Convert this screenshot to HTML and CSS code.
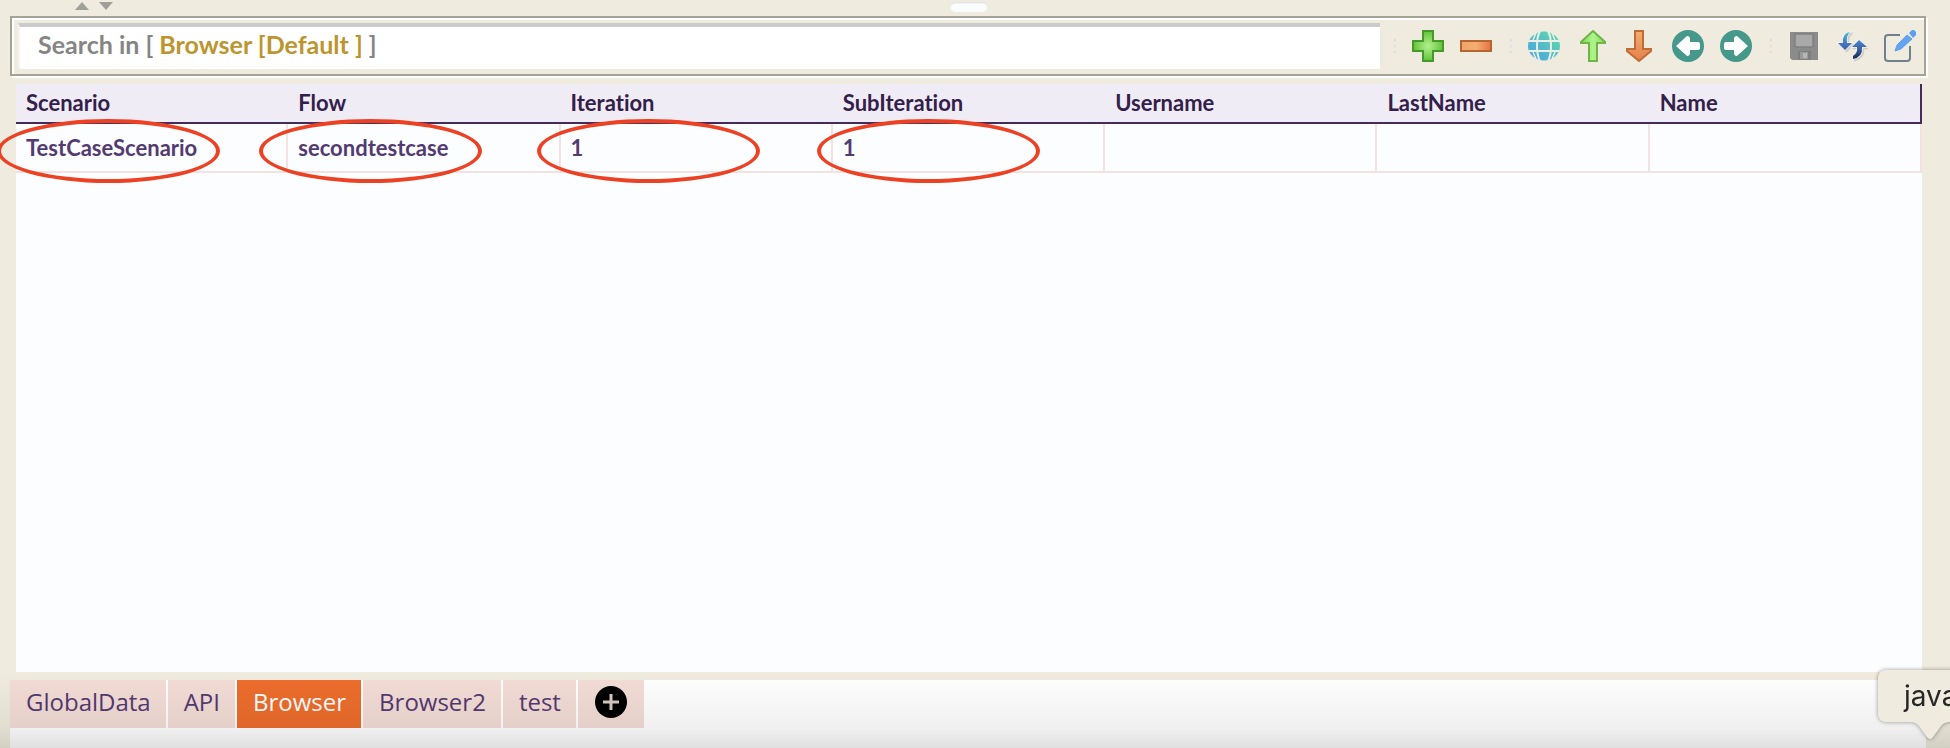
FILE: index.html
```html
<!DOCTYPE html>
<html lang="en">
<head>
<meta charset="utf-8">
<title>Test Data</title>
<link rel="stylesheet" href="styles.css">
</head>
<body>
<div class="app">
  <div class="split-bar">
    <button class="split-btn" aria-label="Collapse up"><svg width="14" height="8" viewBox="0 0 14 8"><path d="M0 8L7 0l7 8z" fill="#a09f9a"/></svg></button>
    <button class="split-btn" aria-label="Collapse down"><svg width="14" height="8" viewBox="0 0 14 8"><path d="M0 0l7 8 7-8z" fill="#a09f9a"/></svg></button>
    <span class="grip"></span>
  </div>

  <div class="toolbar">
    <div class="search">
      <label class="search-label" for="search">Search in [ <span class="scope">Browser [Default ]</span> ]</label>
      <input class="search-input" id="search" type="text">
    </div>
    <div class="tools">
      <span class="sep"></span>
      <button class="tool" aria-label="Add row">
        <svg viewBox="0 0 32 32"><defs><radialGradient id="gp"><stop offset="0" stop-color="#b4f08c"/><stop offset="1" stop-color="#62c23c"/></radialGradient></defs><path d="M11 1h10v10h10v10H21v10H11V21H1V11h10z" fill="url(#gp)" stroke="#469a28" stroke-width="2"/></svg>
      </button>
      <button class="tool" aria-label="Delete row">
        <svg viewBox="0 0 32 32"><defs><linearGradient id="gm"><stop offset="0" stop-color="#f0a468"/><stop offset=".5" stop-color="#f4ae72"/><stop offset="1" stop-color="#e67444"/></linearGradient></defs><path d="M1 11h30v10H1z" fill="url(#gm)" stroke="#b5652f" stroke-width="2"/></svg>
      </button>
      <span class="sep"></span>
      <button class="tool" aria-label="Global data">
        <svg viewBox="0 0 32 32"><defs><linearGradient id="gg" x1="0" y1="1" x2="1" y2="0"><stop offset="0" stop-color="#4aa0e4"/><stop offset=".5" stop-color="#56bcc8"/><stop offset="1" stop-color="#5fe0a4"/></linearGradient></defs><ellipse cx="16" cy="16" rx="16" ry="14.5" fill="url(#gg)"/><path d="M1 11h30M1 21h30M12 1C8 8 8 24 12 31M20 1c4 7 4 23 0 30" fill="none" stroke="#ebf0e6" stroke-width="2"/><path d="M8 3l-3 7M24 3l3 7M5 22l3 7M27 22l-3 7" fill="none" stroke="#ebf0e6" stroke-width="1.5"/></svg>
      </button>
      <button class="tool" aria-label="Move up">
        <svg viewBox="0 0 32 32"><defs><linearGradient id="gu"><stop offset="0" stop-color="#7fd858"/><stop offset=".5" stop-color="#b0f48c"/><stop offset="1" stop-color="#84dc5c"/></linearGradient></defs><path d="M17 1L29 12v1h-8v18h-8V13H5v-1z" fill="url(#gu)" stroke="#72b448" stroke-width="2"/></svg>
      </button>
      <button class="tool" aria-label="Move down">
        <svg viewBox="0 0 32 32"><defs><linearGradient id="gd" x1="0" y1="0" x2="0" y2="1"><stop offset="0" stop-color="#f4ac70"/><stop offset="1" stop-color="#e4804c"/></linearGradient></defs><path d="M11 1h8v18h8v2L15 31 3 21v-2h8z" fill="url(#gd)" stroke="#c06c34" stroke-width="2"/></svg>
      </button>
      <button class="tool" aria-label="Move left">
        <svg viewBox="0 0 32 32"><circle cx="16" cy="16" r="16" fill="#45988a"/><path d="M4 16L15 6q3 0 3 3v3h8q2 0 2 2v4q0 2-2 2h-8v3q0 3-3 3z" fill="#fff"/></svg>
      </button>
      <button class="tool" aria-label="Move right">
        <svg viewBox="0 0 32 32"><circle cx="16" cy="16" r="16" fill="#45988a"/><path d="M28 16L17 6q-3 0-3 3v3H6q-2 0-2 2v4q0 2 2 2h8v3q0 3 3 3z" fill="#fff"/></svg>
      </button>
      <span class="sep"></span>
      <button class="tool" aria-label="Save">
        <svg viewBox="0 0 32 32"><path d="M2 2h28v28H4l-2-2z" fill="#8b8b8b"/><path d="M7 4h18v13H7z" fill="#9c9c9c" stroke="#7a7a7a"/><path d="M8 5h16v11H8z" fill="#a9a9a9"/><path d="M10 21h13v9H10z" fill="#7e7e7e"/><path d="M12 22h8v7h-8z" fill="#9a9a9a"/><path d="M15 23h4v5h-4z" fill="#b5b5b5"/></svg>
      </button>
      <button class="tool" aria-label="Reload">
        <svg viewBox="0 0 32 32"><defs><linearGradient id="gl" x1="0" y1="0" x2="0" y2="1"><stop offset="0" stop-color="#4cc0dc"/><stop offset=".6" stop-color="#4478c4"/><stop offset="1" stop-color="#3c62ac"/></linearGradient><linearGradient id="gr" x1="0" y1="0" x2="0" y2="1"><stop offset="0" stop-color="#4c86d0"/><stop offset=".45" stop-color="#3c62ac"/><stop offset="1" stop-color="#182850"/></linearGradient></defs><g fill="#cfcdc3" stroke="#cfcdc3" stroke-width="1.5" transform="translate(1.5 1.5)"><path d="M14 2q-8 1-7 11H2l7 7 7-7h-5q-1-7 3-11z"/><path d="M23 10l-7 7h5q1 6-4 9v3q10-2 9-12h5z"/></g><path d="M14 2q-8 1-7 11H2l7 7 7-7h-5q-1-7 3-11z" fill="url(#gl)" stroke="#f4f4f2" stroke-width="1.5" paint-order="stroke"/><path d="M23 10l-7 7h5q1 6-4 9v3q10-2 9-12h5z" fill="url(#gr)" stroke="#f4f4f2" stroke-width="1.5" paint-order="stroke"/></svg>
      </button>
      <button class="tool" aria-label="Edit">
        <svg viewBox="0 0 32 32"><path d="M16 5H4Q1 5 1 8v20q0 3 3 3h19q3 0 3-3V16" fill="none" stroke="#708090" stroke-width="2"/><path d="M11 21l2-6L23 5l5 4-11 10z" fill="#62a4f0" stroke="#62a4f0" stroke-linejoin="round"/><path d="M25 3l3-3h2l2 2v3l-3 3z" fill="#5a9ff0"/></svg>
      </button>
    </div>
  </div>

  <div class="grid-pane">
    <table class="grid">
      <thead><tr><th>Scenario</th><th>Flow</th><th>Iteration</th><th>SubIteration</th><th>Username</th><th>LastName</th><th>Name</th></tr></thead>
      <tbody><tr><td>TestCaseScenario</td><td>secondtestcase</td><td>1</td><td>1</td><td></td><td></td><td></td></tr></tbody>
    </table>
    <span class="mark mark-scenario"></span>
    <span class="mark mark-flow"></span>
    <span class="mark mark-iteration"></span>
    <span class="mark mark-subiteration"></span>
  </div>

  <div class="tabs">
    <button class="tab">GlobalData</button>
    <button class="tab">API</button>
    <button class="tab active">Browser</button>
    <button class="tab">Browser2</button>
    <button class="tab">test</button>
    <button class="tab add" aria-label="Add sheet"><svg width="32" height="32" viewBox="0 0 32 32"><circle cx="16" cy="16" r="16" fill="#000"/><path d="M16 8v16M8 16h16" stroke="#d9c8c3" stroke-width="3"/></svg></button>
  </div>
  <div class="tooltip">java<svg class="tooltip-tip" width="40" height="18" viewBox="0 0 40 18"><path d="M0 0q6 0 9 4l8 11q3 4 6 0l8-11q3-4 9-4z" fill="#efecdf"/></svg></div>
</div>
</body>
</html>
```

FILE: styles.css
```css
* { box-sizing: border-box; }

body {
  margin: 0;
  background: #efebde;
  font-family: Lato, "Noto Sans", sans-serif;
  font-variant-ligatures: none;
}

button {
  border: 0;
  padding: 0;
  background: none;
  font: inherit;
}

.app {
  position: relative;
  display: flex;
  flex-direction: column;
  min-height: 100vh;
  padding: 0 24px 0 10px;
  overflow: hidden;
}

/* shade along the lower edge */
.app::after {
  content: "";
  position: absolute;
  left: 0;
  right: 0;
  bottom: 0;
  height: 76px;
  background: linear-gradient(rgba(0, 0, 0, 0), rgba(0, 0, 0, 0.06) 74%, rgba(0, 0, 0, 0.12));
  pointer-events: none;
}

.split-bar {
  position: relative;
  display: flex;
  gap: 10px;
  height: 16px;
  padding: 2px 0 0 65px;
}

.split-btn {
  display: flex;
  height: 8px;
}

.grip {
  position: absolute;
  left: 50%;
  top: 2px;
  width: 38px;
  height: 10px;
  margin-left: -18px;
  border-radius: 5px;
  background: #fbfcfe;
  box-shadow: inset 0 1px 2px #dcdcde;
}

.toolbar {
  display: flex;
  align-items: center;
  gap: 12px;
  height: 60px;
  padding: 0 8px 0 6px;
  border: 2px solid #a5a396;
  box-shadow: inset 2px 2px #fff, 2px 2px #fff;
}

.search {
  flex: 1;
  display: grid;
  height: 46px;
  border-top: 4px solid #cbcbcb;
  border-left: 2px solid #f2f2f2;
  background: #fff;
}

.search-label,
.search-input {
  grid-area: 1 / 1;
  width: 100%;
  padding: 0 0 8px 18px;
}

.search-label {
  align-self: center;
  color: #858585;
  font-size: 25px;
  font-weight: 700;
  line-height: 32px;
}

.scope { color: #bc952e; }

.search-input {
  border: 0;
  background: transparent;
  font-family: inherit;
  font-size: 25px;
}

.tools {
  display: flex;
  align-items: center;
  gap: 16px;
}

.tool {
  display: flex;
  width: 32px;
  height: 32px;
}

.tool svg {
  width: 32px;
  height: 32px;
}

.sep {
  width: 4px;
  height: 14px;
  background: radial-gradient(circle at 3px 1px, #dfdfe0 1px, transparent 2px) 0 0 / 4px 6px;
}

.grid-pane {
  position: relative;
  flex: 1;
  margin: 8px 4px 8px 6px;
  background: #fbfdfe;
}

.grid {
  width: 100%;
  table-layout: fixed;
  border-collapse: separate;
  border-spacing: 0;
  font-size: 22px;
  font-weight: 700;
  line-height: 24px;
}

.grid th,
.grid td {
  padding: 0 10px;
  text-align: left;
}

.grid th {
  height: 40px;
  border-bottom: 2px solid #432c5c;
  background: #f0ecf6;
  color: #33204a;
}

.grid th:last-child { border-right: 2px solid #432c5c; }

.grid td {
  height: 49px;
  border-right: 2px solid #f3e2df;
  border-bottom: 2px solid #f3e2df;
  color: #533a71;
}

.mark {
  position: absolute;
  top: 35px;
  width: 223px;
  height: 64px;
  border: 4px solid #ed4123;
  border-radius: 50%;
}

.mark-scenario { left: -19px; }
.mark-flow { left: 243px; }
.mark-iteration { left: 521px; }
.mark-subiteration { left: 801px; }

.tabs {
  display: flex;
  align-items: flex-start;
  gap: 2px;
  height: 68px;
  background: #fff;
}

.tab {
  height: 48px;
  padding: 0 15px 4px 16px;
  background: #f3dcd6;
  color: #533a71;
  font-family: "Open Sans", "Noto Sans", sans-serif;
  font-size: 24px;
  font-weight: 500;
  line-height: 44px;
}

.tab.active {
  background: #ed6d2c;
  color: #fff;
}

.tab.add {
  display: flex;
  padding: 6px 17px;
}

.tooltip {
  position: absolute;
  z-index: 1;
  right: -32px;
  bottom: 26px;
  width: 104px;
  height: 52px;
  padding-left: 26px;
  border-radius: 8px;
  background: #efecdf;
  color: #262626;
  font-family: Inter, "Liberation Sans", sans-serif;
  font-size: 28px;
  line-height: 52px;
  filter: drop-shadow(0 0 2px rgba(0, 0, 0, 0.4));
}

.tooltip-tip {
  position: absolute;
  top: 52px;
  left: 32px;
}
```
